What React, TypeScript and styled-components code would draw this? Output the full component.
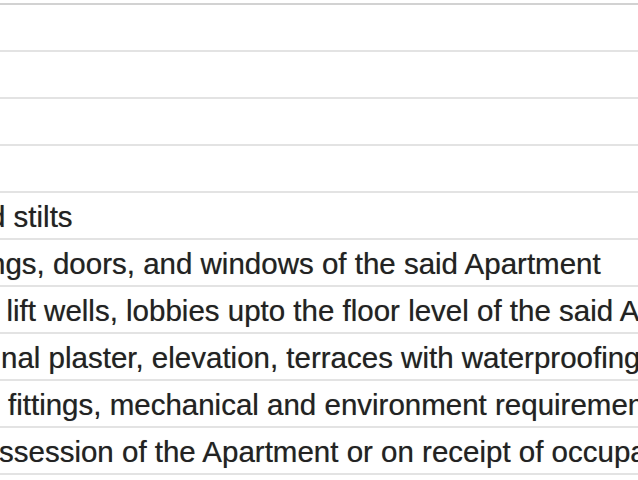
import React from "react";
import styled, { createGlobalStyle } from "styled-components";

const Global = createGlobalStyle`
  html, body {
    margin: 0;
    padding: 0;
    background: #ffffff;
  }
  body {
    font-family: "Liberation Sans", Arial, sans-serif;
    overflow: hidden;
  }
`;

const Page = styled.div`
  width: 638px;
  height: 480px;
  padding-top: 3px;
  box-sizing: border-box;
  overflow: hidden;
  background: #ffffff;
`;

const Table = styled.div`
  display: flex;
  flex-direction: column;
  border-top: 2px solid #d2d2d2;
`;

const Row = styled.div`
  height: 45px;
  border-bottom: 2px solid #e3e3e3;
  display: flex;
  align-items: center;
  overflow: hidden;
  white-space: nowrap;
`;

const Cell = styled.span<{ $offset: number }>`
  margin-left: ${(p) => p.$offset}px;
  font-size: 29.5px;
  line-height: 45px;
  margin-top: 2px;
  color: #222222;
  text-shadow: 0 0 0.7px rgba(0, 0, 0, 0.45);
  flex: none;
`;

const rows: { text: string; offset: number }[] = [
  { text: "", offset: 0 },
  { text: "", offset: 0 },
  { text: "", offset: 0 },
  { text: "", offset: 0 },
  { text: "d stilts", offset: -11 },
  { text: "ngs, doors, and windows of the said Apartment", offset: -11 },
  { text: ", lift wells, lobbies upto the floor level of the said Apartment", offset: -10 },
  { text: "nal plaster, elevation, terraces with waterproofing", offset: 1 },
  { text: "fittings, mechanical and environment requirements", offset: 8 },
  { text: "ssession of the Apartment or on receipt of occupancy", offset: -1 },
  { text: "", offset: 0 },
];

export default function App() {
  return (
    <>
      <Global />
      <Page>
        <Table>
          {rows.map((r, i) => (
            <Row key={i}>
              <Cell $offset={r.offset}>{r.text || "\u00a0"}</Cell>
            </Row>
          ))}
        </Table>
      </Page>
    </>
  );
}
